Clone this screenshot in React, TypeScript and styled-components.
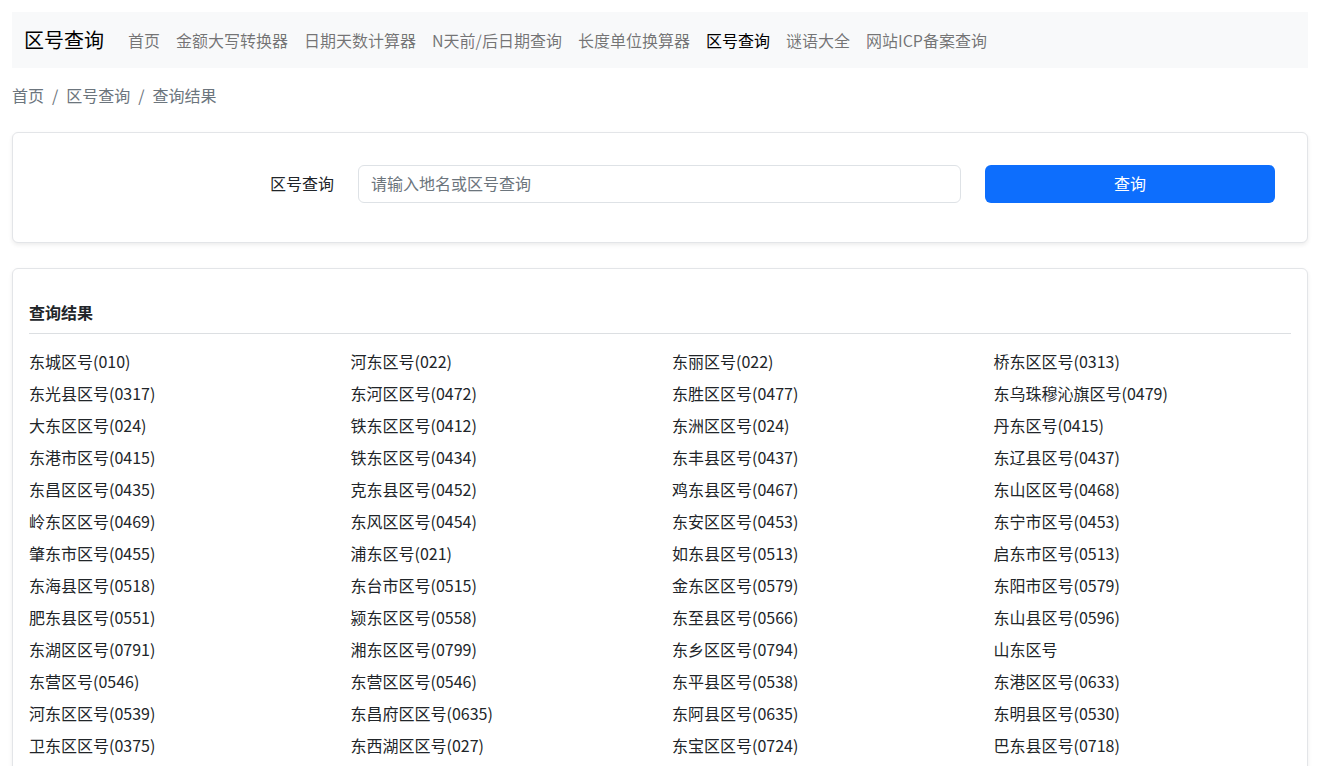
import styled, { createGlobalStyle } from "styled-components";

const GlobalStyle = createGlobalStyle`
  * { box-sizing: border-box; }
  body {
    margin: 0;
    background: #fff;
    color: #212529;
    font-family: "Noto Sans CJK SC", "Noto Sans", "Liberation Sans", sans-serif;
    font-size: 16px;
    line-height: 24px;
  }
`;

const navLinks = [
  "首页",
  "金额大写转换器",
  "日期天数计算器",
  "N天前/后日期查询",
  "长度单位换算器",
  "区号查询",
  "谜语大全",
  "网站ICP备案查询",
];

const results = [
  "东城区号(010)", "河东区号(022)", "东丽区号(022)", "桥东区区号(0313)",
  "东光县区号(0317)", "东河区区号(0472)", "东胜区区号(0477)", "东乌珠穆沁旗区号(0479)",
  "大东区区号(024)", "铁东区区号(0412)", "东洲区区号(024)", "丹东区号(0415)",
  "东港市区号(0415)", "铁东区区号(0434)", "东丰县区号(0437)", "东辽县区号(0437)",
  "东昌区区号(0435)", "克东县区号(0452)", "鸡东县区号(0467)", "东山区区号(0468)",
  "岭东区区号(0469)", "东风区区号(0454)", "东安区区号(0453)", "东宁市区号(0453)",
  "肇东市区号(0455)", "浦东区号(021)", "如东县区号(0513)", "启东市区号(0513)",
  "东海县区号(0518)", "东台市区号(0515)", "金东区区号(0579)", "东阳市区号(0579)",
  "肥东县区号(0551)", "颍东区区号(0558)", "东至县区号(0566)", "东山县区号(0596)",
  "东湖区区号(0791)", "湘东区区号(0799)", "东乡区区号(0794)", "山东区号",
  "东营区号(0546)", "东营区区号(0546)", "东平县区号(0538)", "东港区区号(0633)",
  "河东区区号(0539)", "东昌府区区号(0635)", "东阿县区号(0635)", "东明县区号(0530)",
  "卫东区区号(0375)", "东西湖区区号(027)", "东宝区区号(0724)", "巴东县区号(0718)",
];

const App = () => {
  return (
    <>
      <GlobalStyle />
      <Page>
        <Navbar>
          <Brand>区号查询</Brand>
          <NavList>
            {navLinks.map((item) => (
              <NavLink key={item} $active={item === "区号查询"}>
                {item}
              </NavLink>
            ))}
          </NavList>
        </Navbar>

        <Breadcrumb>
          <Crumb>首页</Crumb>
          <Divider>/</Divider>
          <Crumb>区号查询</Crumb>
          <Divider>/</Divider>
          <Crumb>查询结果</Crumb>
        </Breadcrumb>

        <Card>
          <SearchBody>
            <SearchRow>
              <Label>区号查询</Label>
              <Input placeholder="请输入地名或区号查询" />
              <Button>查询</Button>
            </SearchRow>
          </SearchBody>
        </Card>

        <ResultCard>
          <ResultBody>
            <ResultTitle>查询结果</ResultTitle>
            <Rule />
            <ResultGrid>
              {results.map((r, i) => (
                <ResultItem key={i}>{r}</ResultItem>
              ))}
            </ResultGrid>
          </ResultBody>
        </ResultCard>
      </Page>
    </>
  );
};

export default App;

const Page = styled.div`
  padding: 12px;
`;

const Navbar = styled.nav`
  display: flex;
  align-items: center;
  height: 56px;
  padding: 0 12px 1px;
  background: #f8f9fa;
`;

const Brand = styled.div`
  font-size: 20px;
  line-height: 30px;
  color: #000;
  margin-right: 16px;
`;

const NavList = styled.div`
  display: flex;
  align-items: center;
`;

const NavLink = styled.span<{ $active?: boolean }>`
  padding: 8px;
  font-size: 16px;
  color: ${(p) => (p.$active ? "#000" : "rgba(0, 0, 0, 0.55)")};
`;

const Breadcrumb = styled.div`
  display: flex;
  align-items: center;
  margin: 15px 0 25px;
  color: #6c757d;
`;

const Crumb = styled.span``;

const Divider = styled.span`
  padding: 0 8px;
`;

const Card = styled.div`
  background: #fff;
  border: 1px solid #e3e5e8;
  border-radius: 6px;
  box-shadow: 0 2px 4px rgba(0, 0, 0, 0.075);
`;

const SearchBody = styled.div`
  padding: 32px 16px 39px;
`;

const SearchRow = styled.div`
  display: grid;
  grid-template-columns: 1fr 603px 290px;
  column-gap: 24px;
  align-items: center;
  padding-right: 16px;
`;

const Label = styled.label`
  text-align: right;
  color: #212529;
  margin-top: -2px;
`;

const Input = styled.input`
  height: 38px;
  padding: 6px 12px 8px;
  font: inherit;
  color: #212529;
  border: 1px solid #dee2e6;
  border-radius: 6px;
  outline: none;
  &::placeholder {
    color: #6c757d;
  }
`;

const Button = styled.button`
  height: 38px;
  padding: 0 0 2px;
  font: inherit;
  color: #fff;
  background: #0d6efd;
  border: none;
  border-radius: 6px;
`;

const ResultCard = styled(Card)`
  margin-top: 25px;
`;

const ResultBody = styled.div`
  padding: 31px 16px 16px;
`;

const ResultTitle = styled.h5`
  margin: 0;
  font-size: 16px;
  line-height: 24px;
  font-weight: 700;
`;

const Rule = styled.hr`
  margin: 9px 0 15px;
  border: 0;
  border-top: 1px solid #dcdfe2;
`;

const ResultGrid = styled.div`
  display: grid;
  grid-template-columns: repeat(4, 1fr);
  row-gap: 8px;
  margin: 0 -12px;
`;

const ResultItem = styled.div`
  padding: 0 12px;
  line-height: 24px;
  color: #212529;
  white-space: nowrap;
`;
